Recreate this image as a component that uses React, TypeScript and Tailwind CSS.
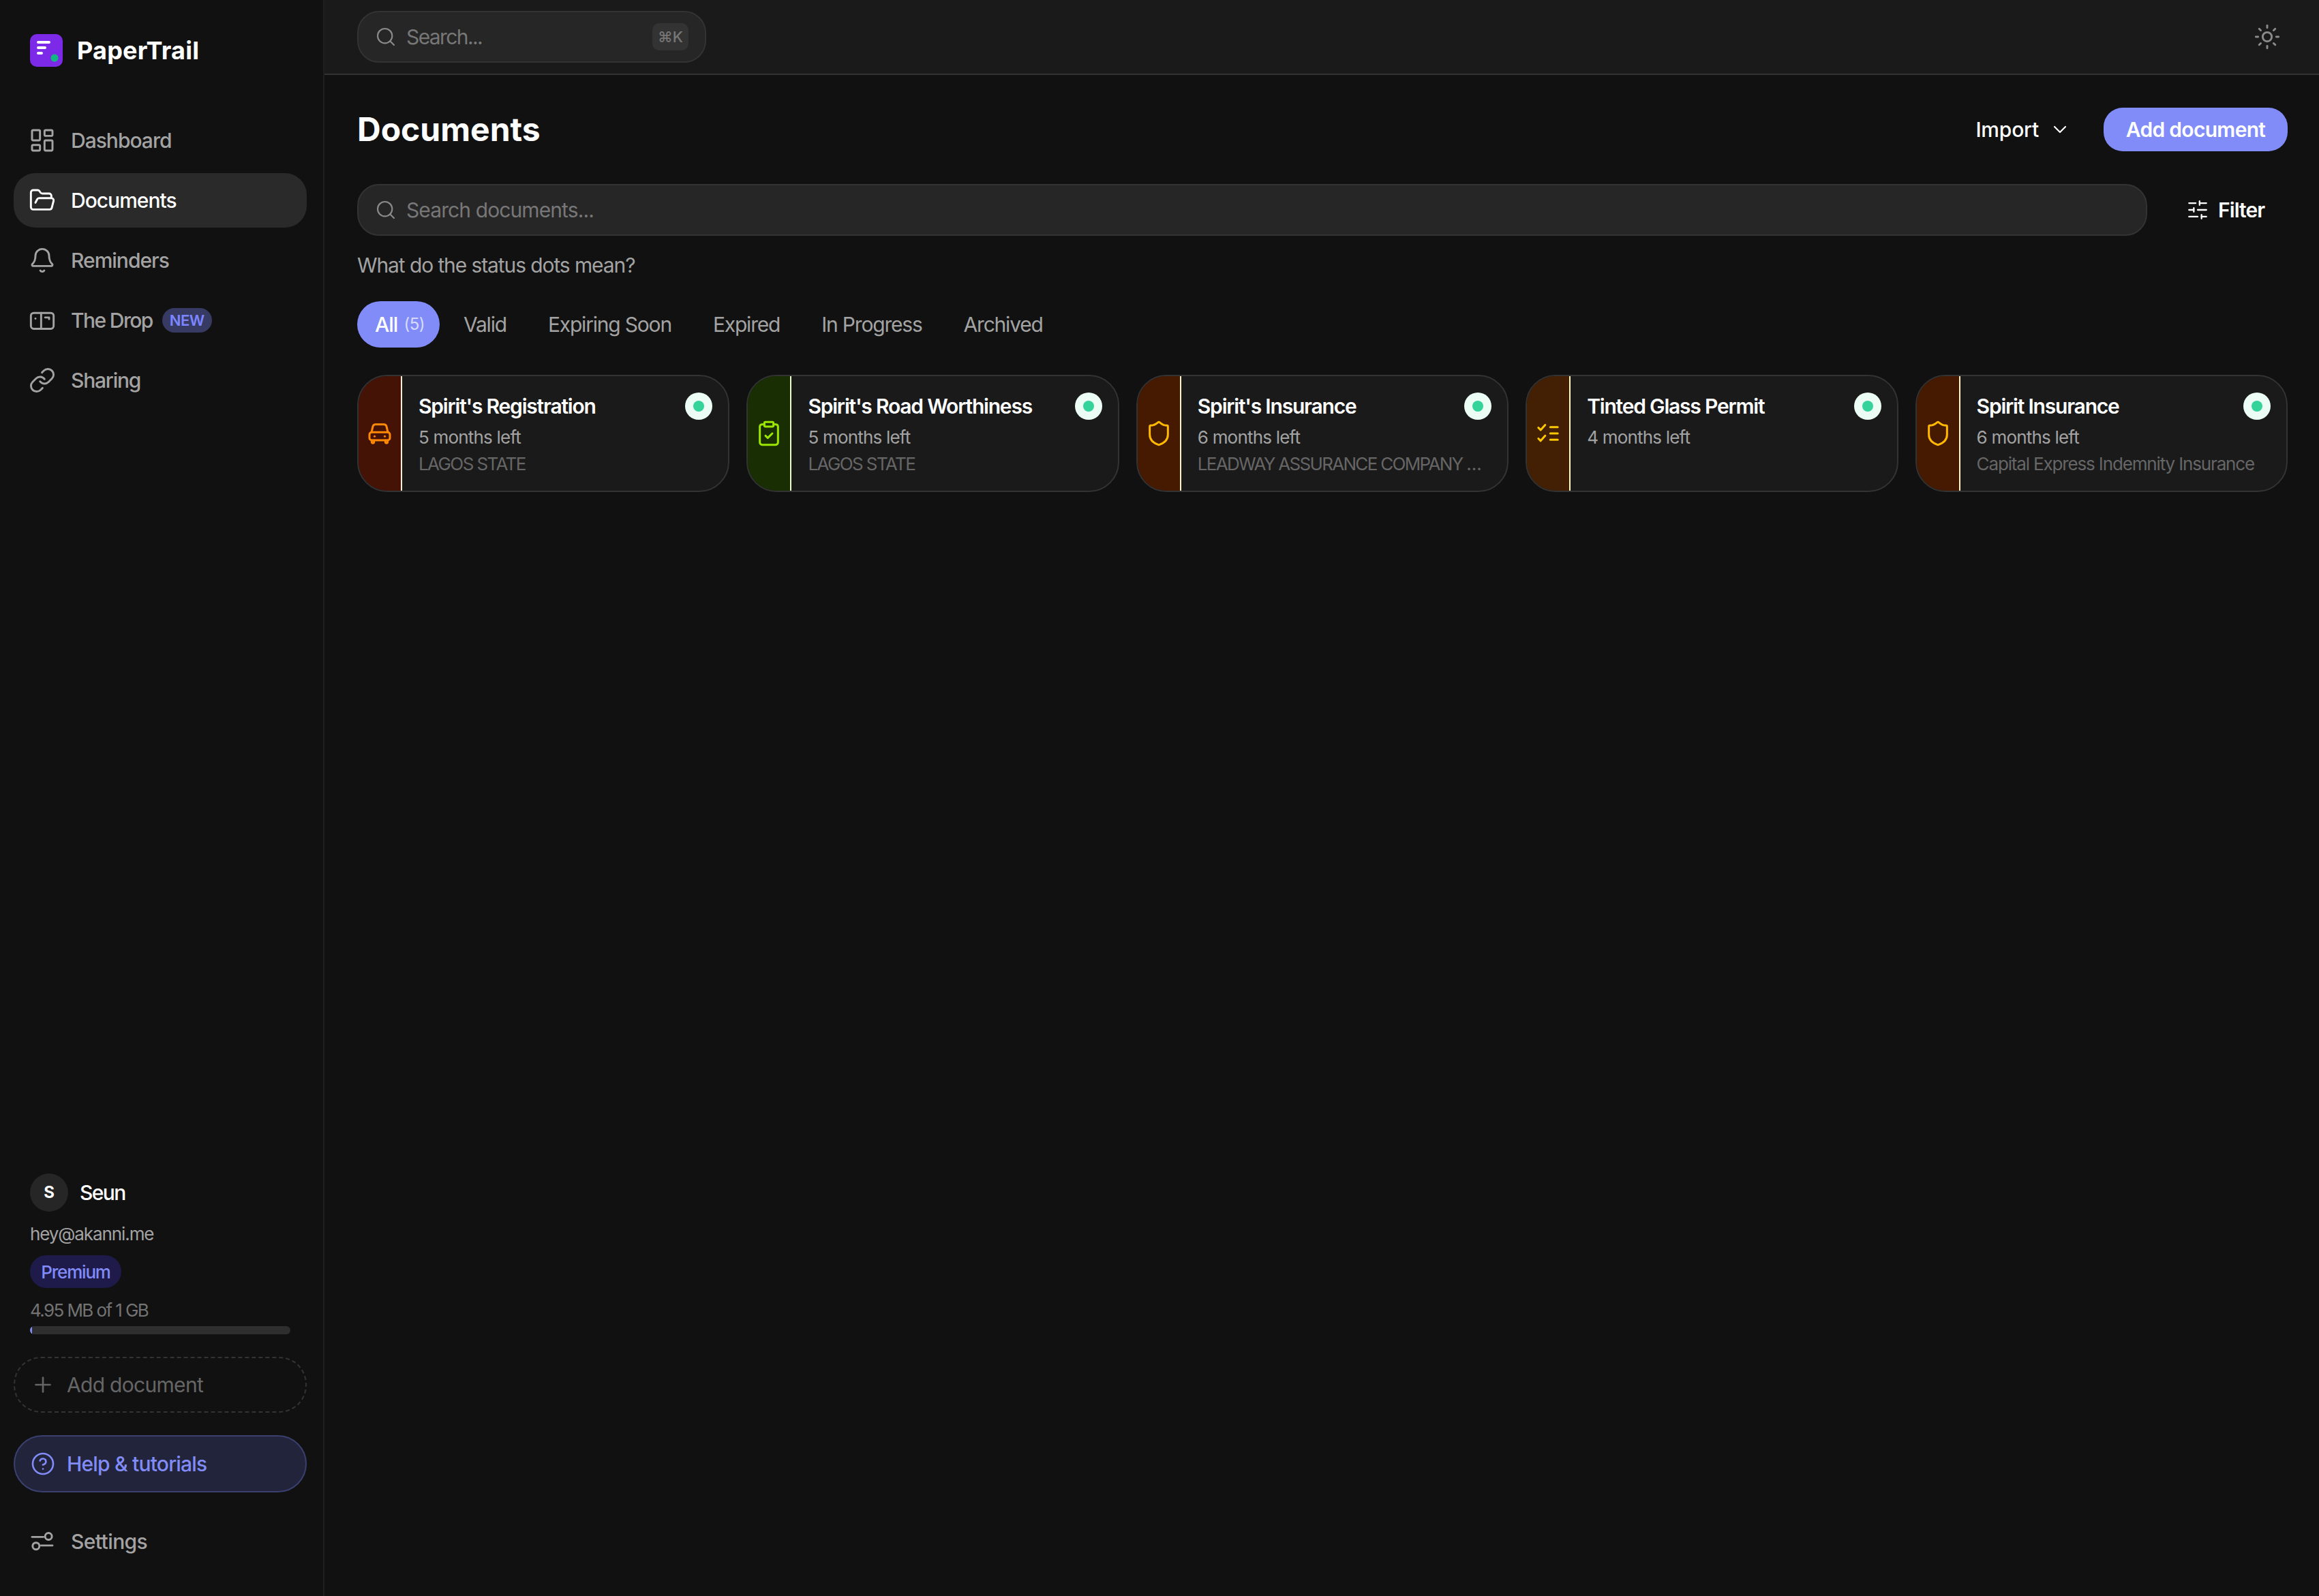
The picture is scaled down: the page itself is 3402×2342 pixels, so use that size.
import React from "react";
import {
  LayoutDashboard, FolderOpen, Bell, Link, Plus, CircleHelp, Search, Sun, ChevronDown,
  SlidersHorizontal, ClipboardCheck, Shield,
} from "lucide-react";

function Logo() {
  return (
    <svg width="48" height="48" viewBox="0 0 48 48" className="shrink-0">
      <rect width="48" height="48" rx="10" fill="#7c2ae8" />
      <rect x="10" y="10" width="20" height="4" rx="2" fill="#fff" />
      <rect x="10" y="18" width="14" height="4" rx="2" fill="#fff" />
      <rect x="10" y="26" width="9" height="4" rx="2" fill="#fff" />
      <circle cx="36" cy="35" r="5.5" fill="#10b981" />
    </svg>
  );
}

function DropIcon() {
  return (
    <svg width="40" height="40" viewBox="0 0 24 24" fill="none" stroke="currentColor" strokeWidth="1.75" strokeLinecap="round" strokeLinejoin="round">
      <rect x="2" y="5.5" width="20" height="14" rx="2.5" />
      <path d="M11 5.5v14" />
      <path d="M6 10.5h.01" />
      <path d="M14.5 9.5h3.5v1.5" />
    </svg>
  );
}

function SettingsIcon() {
  return (
    <svg width="40" height="40" viewBox="0 0 24 24" fill="none" stroke="currentColor" strokeWidth="1.75" strokeLinecap="round" strokeLinejoin="round">
      <path d="M3 8h10" />
      <circle cx="17.5" cy="7.5" r="3" />
      <path d="M11 15.5h10" />
      <circle cx="6.5" cy="16" r="3" />
    </svg>
  );
}

function CarIcon({ cls }: { cls: string }) {
  return (
    <svg width="40" height="40" viewBox="0 0 24 24" fill="none" stroke="currentColor" strokeWidth="1.8" strokeLinecap="round" strokeLinejoin="round" className={cls}>
      <path d="M4.8 11 6 5.8A2.5 2.5 0 0 1 8.4 4h7.2A2.5 2.5 0 0 1 18 5.8l1.2 5.2" />
      <rect x="3" y="11" width="18" height="7" rx="2" />
      <path d="M5 18v1.5a1 1 0 0 0 2 0V18" />
      <path d="M17 18v1.5a1 1 0 0 0 2 0V18" />
      <path d="M7.5 14.5h.01" />
      <path d="M16.5 14.5h.01" />
    </svg>
  );
}

function ChecksIcon({ cls }: { cls: string }) {
  return (
    <svg width="40" height="40" viewBox="0 0 24 24" fill="none" stroke="currentColor" strokeWidth="1.8" strokeLinecap="round" strokeLinejoin="round" className={cls}>
      <path d="m3.5 7 2 2 4-4.5" />
      <path d="m3.5 16.5 2 2 4-4.5" />
      <path d="M14 6.4h6.5" />
      <path d="M14 12h6.5" />
      <path d="M14 17.6h6.5" />
    </svg>
  );
}

function NavItem({ icon, label, active, badge, cls }: { icon: React.ReactNode; label: string; active?: boolean; badge?: boolean; cls?: string }) {
  return (
    <div className={`flex h-[80px] items-center gap-[22px] rounded-[32px] pl-[22px] ${active ? "bg-[#2a2a2a] text-white" : "text-[#a3a3a3]"}`}>
      {icon}
      <span className={`text-[30px] font-medium leading-[40px] ${cls ?? "tracking-[-1px]"}`}>{label}</span>
      {badge && (
        <span className="-ml-[8px] flex h-[36px] w-[73px] items-center justify-center rounded-full bg-[#373a63] text-[22px] font-semibold tracking-[-0.5px] text-[#7c86ff]">NEW</span>
      )}
    </div>
  );
}

function SearchBox({ placeholder, children, cls, track }: { placeholder: string; children?: React.ReactNode; cls: string; track: string }) {
  return (
    <div className={`flex h-[76px] items-center rounded-[32px] border-2 border-[#333333] bg-[#262626] pl-[24px] pr-[24px] ${cls}`}>
      <Search size={32} strokeWidth={1.6} className="shrink-0 text-[#8a8a8a]" />
      <span className={`ml-[14px] flex-1 text-[30px] leading-[40px] text-[#777777] ${track}`}>{placeholder}</span>
      {children}
    </div>
  );
}

type Doc = {
  title: string; left: string; sub?: string; subTrack?: string; icon: React.ReactNode; stripe: string; line: string;
};

const docs: Doc[] = [
  { title: "Spirit's Registration", left: "5 months left", sub: "LAGOS STATE", subTrack: "tracking-[-1.6px]", icon: <CarIcon cls="text-[#ff8904]" />, stripe: "bg-[#441306]", line: "bg-[#ffedd4]" },
  { title: "Spirit's Road Worthiness", left: "5 months left", sub: "LAGOS STATE", subTrack: "tracking-[-1.6px]", icon: <ClipboardCheck size={40} strokeWidth={1.8} className="text-[#9ae600]" />, stripe: "bg-[#192e03]", line: "bg-[#ecfcca]" },
  { title: "Spirit's Insurance", left: "6 months left", sub: "LEADWAY ASSURANCE COMPANY LIMITED", subTrack: "tracking-[-1.7px]", icon: <Shield size={40} strokeWidth={1.8} className="text-[#ffb900]" />, stripe: "bg-[#461901]", line: "bg-[#fef3c6]" },
  { title: "Tinted Glass Permit", left: "4 months left", icon: <ChecksIcon cls="text-[#fcc800]" />, stripe: "bg-[#432004]", line: "bg-[#fef9c2]" },
  { title: "Spirit Insurance", left: "6 months left", sub: "Capital Express Indemnity Insurance", subTrack: "tracking-[-1.15px]", icon: <Shield size={40} strokeWidth={1.8} className="text-[#ffb900]" />, stripe: "bg-[#461901]", line: "bg-[#fef3c6]" },
];

function Card({ d }: { d: Doc }) {
  return (
    <div className="flex h-[172px] min-w-0 overflow-hidden rounded-[44px] border-2 border-[#333333] bg-[#1a1a1a]">
      <div className={`flex w-[62px] shrink-0 items-center justify-center ${d.stripe}`}>{d.icon}</div>
      <div className={`w-[2px] shrink-0 ${d.line}`} />
      <div className="min-w-0 flex-1 pl-[24px] pr-[23px] pt-[24px]">
        <div className="flex h-[40px] items-center justify-between">
          <span className="text-[30px] font-semibold leading-[40px] tracking-[-1.2px] text-white">{d.title}</span>
          <span className="flex h-[40px] w-[40px] shrink-0 items-center justify-center rounded-full bg-[#ecfdf5]">
            <span className="h-[16px] w-[16px] rounded-full bg-[#34d399]" />
          </span>
        </div>
        <div className="mt-[8px] text-[26px] leading-[36px] tracking-[-0.8px] text-[#a3a3a3]">{d.left}</div>
        {d.sub && <div className={`mr-[8px] mt-[3px] truncate text-[26px] leading-[36px] text-[#666666] ${d.subTrack ?? ""}`}>{d.sub}</div>}
      </div>
    </div>
  );
}

export default function App() {
  return (
    <div className="flex min-h-screen w-full bg-[#111111] font-['Inter','Liberation_Sans',sans-serif] antialiased">
      <aside className="flex h-[2342px] w-[476px] shrink-0 flex-col border-r-2 border-[#1f1f1f] pb-[40px] pl-[20px] pr-[24px] pt-[50px]">
        <div className="flex h-[48px] items-center gap-[21px] pl-[24px]">
          <Logo />
          <span className="text-[36px] font-bold leading-[48px] tracking-[0.2px] text-white">PaperTrail</span>
        </div>
        <nav className="mt-[68px] flex flex-col gap-[8px]">
          <NavItem icon={<LayoutDashboard size={40} strokeWidth={1.75} />} label="Dashboard" />
          <NavItem icon={<FolderOpen size={40} strokeWidth={1.75} />} label="Documents" active />
          <NavItem icon={<Bell size={40} strokeWidth={1.75} />} label="Reminders" />
          <NavItem icon={<DropIcon />} label="The Drop" badge cls="tracking-[-1.6px]" />
          <NavItem icon={<Link size={40} strokeWidth={1.75} />} label="Sharing" cls="tracking-[-1.2px]" />
        </nav>

        <div className="mt-auto pl-[24px]">
          <div className="flex items-center gap-[17px]">
            <span className="flex h-[56px] w-[56px] items-center justify-center rounded-full bg-[#262626] text-[24px] font-bold text-white">S</span>
            <span className="text-[30px] font-medium leading-[40px] tracking-[-1.6px] text-white">Seun</span>
          </div>
          <div className="mt-[15px] text-[26px] leading-[36px] tracking-[-1.1px] text-[#a3a3a3]">hey@akanni.me</div>
          <div className="mt-[13px] flex h-[48px] w-[134px] items-center justify-center rounded-full bg-[#1e1b4b] text-[26px] font-medium tracking-[-1.2px] text-[#818cf8]">Premium</div>
          <div className="mt-[17px] text-[26px] leading-[32px] tracking-[-1.6px] text-[#737373]">4.95 MB of 1 GB</div>
          <div className="mt-[7px] h-[12px] w-[382px] overflow-hidden rounded-full bg-[#2e2e2e]">
            <div className="h-full w-[3px] bg-[#818cf8]" />
          </div>
        </div>

        <div className="mt-[33px] flex h-[82px] items-center gap-[17px] rounded-[40px] border-2 border-dashed border-[#333333] pl-[23px] text-[#666666]">
          <Plus size={36} strokeWidth={1.75} />
          <span className="text-[30px] leading-[40px] tracking-[-0.7px]">Add document</span>
        </div>
        <div className="mt-[33px] flex h-[84px] items-center gap-[17px] rounded-full border-2 border-[#3a4070] bg-[#21243a] pl-[23px] text-[#818cf8]">
          <CircleHelp size={36} strokeWidth={1.75} />
          <span className="text-[30px] font-medium leading-[40px] tracking-[-0.8px]">Help &amp; tutorials</span>
        </div>
        <div className="mt-[32px] flex h-[80px] items-center gap-[22px] pl-[22px] text-[#a3a3a3]">
          <SettingsIcon />
          <span className="text-[30px] font-medium leading-[40px] tracking-[-0.6px]">Settings</span>
        </div>
      </aside>

      <main className="flex min-w-0 flex-1 flex-col">
        <header className="flex h-[110px] shrink-0 items-center justify-between border-b-2 border-[#333333] bg-[#1a1a1a] pl-[48px] pr-[56px]">
          <SearchBox placeholder="Search..." cls="w-[512px] pr-[24px]" track="tracking-[-1.6px]">
            <span className="flex h-[40px] w-[53px] items-center justify-center rounded-[10px] bg-[#333333] text-[22px] font-medium text-[#777777]">⌘K</span>
          </SearchBox>
          <Sun size={40} strokeWidth={1.75} className="text-[#8a8a8a]" />
        </header>

        <div className="flex flex-col pl-[48px] pr-[46px] pt-[48px]">
          <div className="flex h-[64px] items-center justify-between">
            <h1 className="text-[48px] font-bold leading-[64px] text-white">Documents</h1>
            <div className="flex items-center">
              <div className="flex items-center gap-[15px] text-white">
                <span className="text-[30px] font-medium leading-[40px] tracking-[-0.2px]">Import</span>
                <ChevronDown size={32} strokeWidth={1.6} />
              </div>
              <button className="ml-[48px] flex h-[64px] w-[270px] items-center justify-center rounded-[28px] bg-[#818cf8] text-[30px] font-semibold tracking-[-0.7px] text-white">Add document</button>
            </div>
          </div>

          <div className="mt-[48px] flex items-center">
            <SearchBox placeholder="Search documents..." cls="flex-1" track="tracking-[-0.9px]" />
            <div className="ml-[26px] flex w-[180px] items-center gap-[13px] pl-[31px] text-white">
              <SlidersHorizontal size={34} strokeWidth={1.6} />
              <span className="text-[30px] font-semibold leading-[40px] tracking-[-0.9px]">Filter</span>
            </div>
          </div>

          <p className="mt-[23px] text-[30px] leading-[40px] tracking-[-1.1px] text-[#a3a3a3]">What do the status dots mean?</p>

          <div className="mt-[33px] flex items-center gap-[9px]">
            <div className="flex h-[68px] w-[121px] items-center rounded-[34px] bg-[#818cf8] pl-[26px] text-white">
              <span className="text-[30px] font-medium leading-[40px] tracking-[-1px]">All</span>
              <span className="ml-[9px] text-[24px] leading-[40px] tracking-[-0.5px] text-white/70">(5)</span>
            </div>
            {["Valid", "Expiring Soon", "Expired", "In Progress", "Archived"].map((t) => (
              <div key={t} className="flex h-[68px] items-center px-[26px] text-[30px] leading-[40px] tracking-[-1.2px] text-[#a3a3a3]">{t}</div>
            ))}
          </div>

          <div className="mt-[40px] grid grid-cols-5 gap-[25px]">
            {docs.map((d) => <Card key={d.title} d={d} />)}
          </div>
        </div>
      </main>
    </div>
  );
}
